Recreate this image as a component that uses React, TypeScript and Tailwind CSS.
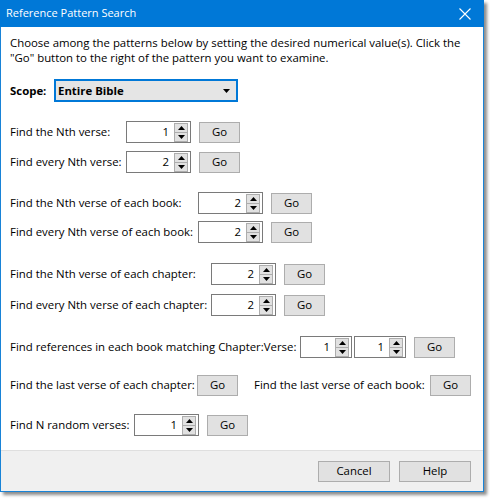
import React from "react";

const font = { fontFamily: '"Open Sans", "Noto Sans", sans-serif' };

function Spinner({ value, w = 65 }: { value: number; w?: number }) {
  return (
    <div
      className="flex h-[22px] items-center border border-[#7a7a7a] bg-white pl-1 pr-[2px]"
      style={{ width: w }}
    >
      <div className="flex-1 pr-[5px] text-right leading-none">{value}</div>
      <div className="flex h-[19px] w-[14px] flex-col">
        <div className="flex h-[10px] items-center justify-center border border-[#adadad] bg-[#e1e1e1]">
          <svg width="7" height="4" viewBox="0 0 7 4">
            <path d="M3.5 0 L7 4 L0 4 Z" fill="#000" />
          </svg>
        </div>
        <div className="-mt-px flex h-[10px] items-center justify-center border border-[#adadad] bg-[#e1e1e1]">
          <svg width="7" height="4" viewBox="0 0 7 4">
            <path d="M0 0 L7 0 L3.5 4 Z" fill="#000" />
          </svg>
        </div>
      </div>
    </div>
  );
}

function Btn({ children, w = 41 }: { children: React.ReactNode; w?: number }) {
  return (
    <div
      className="flex h-[21px] items-center justify-center border border-[#adadad] bg-[#e1e1e1] leading-none"
      style={{ width: w }}
    >
      {children}
    </div>
  );
}

function Row({
  label,
  labelW,
  value,
  className = "",
}: {
  label: string;
  labelW: string;
  value: number;
  className?: string;
}) {
  return (
    <div className={"flex h-[22px] items-center " + className}>
      <div className={labelW + " whitespace-nowrap"}>{label}</div>
      <Spinner value={value} />
      <div className="ml-[8px]">
        <Btn>Go</Btn>
      </div>
    </div>
  );
}

export default function App() {
  return (
    <div className="h-[499px] w-[490px] bg-white" style={font}>
      <div className="flex h-[492px] w-[484px] flex-col border border-[#1883d7] bg-white text-[11.4px] text-black shadow-[3px_3px_3px_rgba(0,0,0,0.45)]">
        {/* Title bar */}
        <div className="-mx-px -mt-px flex h-[27px] shrink-0 items-center justify-between bg-[#0078d7] pl-[6px] pr-[10px] text-white">
          <span className="text-[11px]">Reference Pattern Search</span>
          <svg width="12" height="12" viewBox="0 0 12 12" className="mr-[3px]">
            <path d="M0.5 0.5 L11.5 11.5 M11.5 0.5 L0.5 11.5" stroke="#fff" strokeWidth="1.1" />
          </svg>
        </div>

        {/* Content */}
        <div className="flex flex-1 flex-col px-[9px] pt-[8px]">
          <p className="whitespace-nowrap leading-[15px]">
            Choose among the patterns below by setting the desired numerical value(s). Click the
            <br />
            "Go" button to the right of the pattern you want to examine.
          </p>

          <div className="mt-[14px] flex h-[23px] items-center">
            <span className="w-[44px] font-bold">Scope:</span>
            <div className="flex h-[23px] w-[184px] items-center justify-between border-2 border-[#0078d7] bg-[#e5e5e5] pl-[2px] pr-[6px]">
              <span className="font-bold">Entire Bible</span>
              <svg width="7" height="4" viewBox="0 0 7 4">
                <path d="M0 0 L7 0 L3.5 4 Z" fill="#000" />
              </svg>
            </div>
          </div>

          <Row className="mt-[19px]" label="Find the Nth verse:" labelW="w-[116px]" value={1} />
          <Row className="mt-[8px]" label="Find every Nth verse:" labelW="w-[116px]" value={2} />

          <Row className="mt-[19px]" label="Find the Nth verse of each book:" labelW="w-[188px]" value={2} />
          <Row className="mt-[7px]" label="Find every Nth verse of each book:" labelW="w-[188px]" value={2} />

          <Row className="mt-[20px]" label="Find the Nth verse of each chapter:" labelW="w-[201px]" value={2} />
          <Row className="mt-[9px]" label="Find every Nth verse of each chapter:" labelW="w-[201px]" value={2} />

          <div className="mt-[20px] flex h-[22px] items-center">
            <div className="w-[290px] whitespace-nowrap">Find references in each book matching Chapter:Verse:</div>
            <Spinner value={1} w={52} />
            <div className="ml-[2px]">
              <Spinner value={1} w={52} />
            </div>
            <div className="ml-[8px]">
              <Btn>Go</Btn>
            </div>
          </div>

          <div className="mt-[16px] flex h-[22px] items-center">
            <div className="w-[187px] whitespace-nowrap">Find the last verse of each chapter:</div>
            <Btn>Go</Btn>
            <div className="ml-[16px] w-[176px] whitespace-nowrap">Find the last verse of each book:</div>
            <Btn>Go</Btn>
          </div>

          <Row className="mt-[18px]" label="Find N random verses:" labelW="w-[124px]" value={1} />
        </div>

        {/* Footer */}
        <div className="flex h-[41px] shrink-0 items-center justify-end gap-[9px] border-t border-[#dfdfdf] bg-[#f0f0f0] pr-[12px]">
          <Btn w={72}>Cancel</Btn>
          <Btn w={72}>Help</Btn>
        </div>
      </div>
    </div>
  );
}
